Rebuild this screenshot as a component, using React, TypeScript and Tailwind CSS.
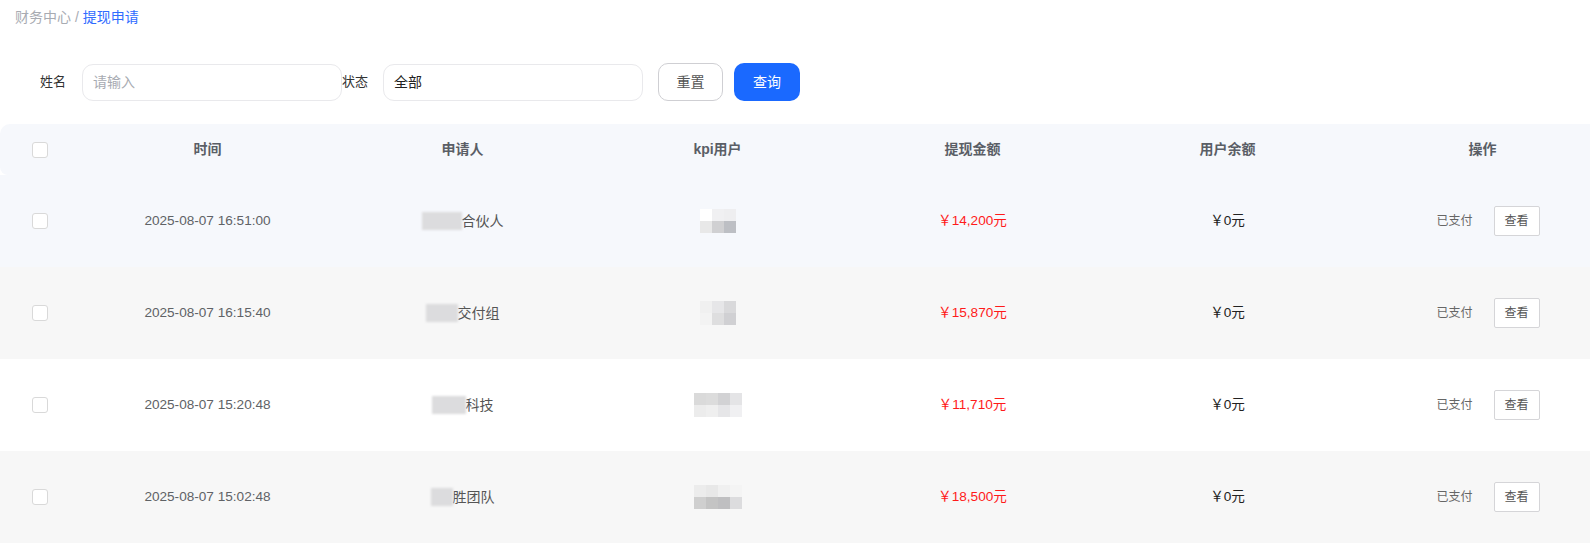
import React from "react";

type Row = {
  time: string;
  blurW: number;
  name: string;
  kpi: string[][];
  amount: string;
  bg: string;
};

const rows: Row[] = [
  {
    time: "2025-08-07 16:51:00",
    blurW: 40,
    name: "合伙人",
    kpi: [
      ["#ffffff", "#f0f0f2", "#eeeef0"],
      ["#e8e8e8", "#d0d0d2", "#bdbfc4"],
    ],
    amount: "￥14,200元",
    bg: "bg-[#f6f8fc]",
  },
  {
    time: "2025-08-07 16:15:40",
    blurW: 32,
    name: "交付组",
    kpi: [
      ["#f0f0f0", "#e6e6e8", "#d9d9db"],
      ["#f3f3f3", "#dededf", "#d0d0d3"],
    ],
    amount: "￥15,870元",
    bg: "bg-[#f7f7f7]",
  },
  {
    time: "2025-08-07 15:20:48",
    blurW: 34,
    name: "科技",
    kpi: [
      ["#dadada", "#dcdcdc", "#d2d2d4", "#e4e4e6"],
      ["#ececec", "#efefef", "#e6e6e8", "#f0f0f2"],
    ],
    amount: "￥11,710元",
    bg: "bg-white",
  },
  {
    time: "2025-08-07 15:02:48",
    blurW: 22,
    name: "胜团队",
    kpi: [
      ["#ececec", "#e8e8e8", "#f0f0f0", "#f4f4f4"],
      ["#cfcfcf", "#c4c4c4", "#bfbfc1", "#dcdcde"],
    ],
    amount: "￥18,500元",
    bg: "bg-[#f7f7f7]",
  },
];

const Checkbox = () => (
  <span className="block w-4 h-4 rounded-[3px] border border-[#d9d9d9] bg-white" />
);

const Mosaic = ({ cells }: { cells: string[][] }) => (
  <span className="inline-flex flex-col">
    {cells.map((r, i) => (
      <span key={i} className="flex">
        {r.map((c, j) => (
          <span key={j} className="block w-[12px] h-[12px]" style={{ backgroundColor: c }} />
        ))}
      </span>
    ))}
  </span>
);

export default function App() {
  return (
    <div className="w-[1590px] h-[549px] bg-white overflow-hidden font-['Liberation_Sans','Noto_Sans_CJK_SC',sans-serif]">
      <div className="pl-[15px] pt-[7px] text-[14px] leading-5">
        <span className="text-[#a8abb2]">财务中心 / </span>
        <span className="text-[#2f6bff]">提现申请</span>
      </div>

      <div className="flex items-center mt-[36px] h-[38px]">
        <span className="ml-[40px] text-[13px] text-[#333]">姓名</span>
        <div className="ml-[16px] w-[260px] h-[37px] rounded-[11px] border border-[#e9e9ec] flex items-center pl-[10px] text-[14px] text-[#a8abb2]">
          请输入
        </div>
        <span className="text-[13px] text-[#333]">状态</span>
        <div className="ml-[15px] w-[260px] h-[37px] rounded-[11px] border border-[#e9e9ec] flex items-center pl-[10px] text-[14px] text-[#222]">
          全部
        </div>
        <button className="ml-[15px] w-[65px] h-[38px] rounded-[10px] border border-[#cfcfd3] bg-white text-[14px] text-[#555]">
          重置
        </button>
        <button className="ml-[11px] w-[66px] h-[38px] rounded-[10px] bg-[#1a69ff] text-[14px] text-white">
          查询
        </button>
      </div>

      <div className="mt-[23px] overflow-hidden">
        <div className="w-[1610px]">
          <div className="grid grid-cols-[80px_repeat(6,255px)] items-center h-[51px] bg-[#f6f8fc] rounded-tl-[10px] rounded-bl-[8px] text-[14px] font-bold text-[#5a5e66]">
            <div className="flex justify-center">
              <Checkbox />
            </div>
            <div className="text-center">时间</div>
            <div className="text-center">申请人</div>
            <div className="text-center">kpi用户</div>
            <div className="text-center">提现金额</div>
            <div className="text-center">用户余额</div>
            <div className="text-center">操作</div>
          </div>

          {rows.map((r, i) => (
            <div
              key={i}
              className={`grid grid-cols-[80px_repeat(6,255px)] items-center h-[92px] text-[14px] ${r.bg}`}
            >
              <div className="flex justify-center">
                <Checkbox />
              </div>
              <div className="text-center text-[#606266] text-[13.6px]">{r.time}</div>
              <div className="flex justify-center items-center text-[#555]">
                <span className="h-[18px] bg-[#dcdcde] blur-[1px]" style={{ width: r.blurW }} />
                <span>{r.name}</span>
              </div>
              <div className="flex justify-center">
                <Mosaic cells={r.kpi} />
              </div>
              <div className="text-center text-[#ff1a1a] text-[13.6px]">{r.amount}</div>
              <div className="text-center text-[#222] text-[13.6px]">￥0元</div>
              <div className="flex justify-center items-center gap-[21px] pl-[11px]">
                <span className="text-[12px] text-[#666]">已支付</span>
                <button className="w-[46px] h-[30px] rounded-[2px] border border-[#d5d5d8] bg-white text-[12px] text-[#555]">
                  查看
                </button>
              </div>
            </div>
          ))}
        </div>
      </div>
    </div>
  );
}
